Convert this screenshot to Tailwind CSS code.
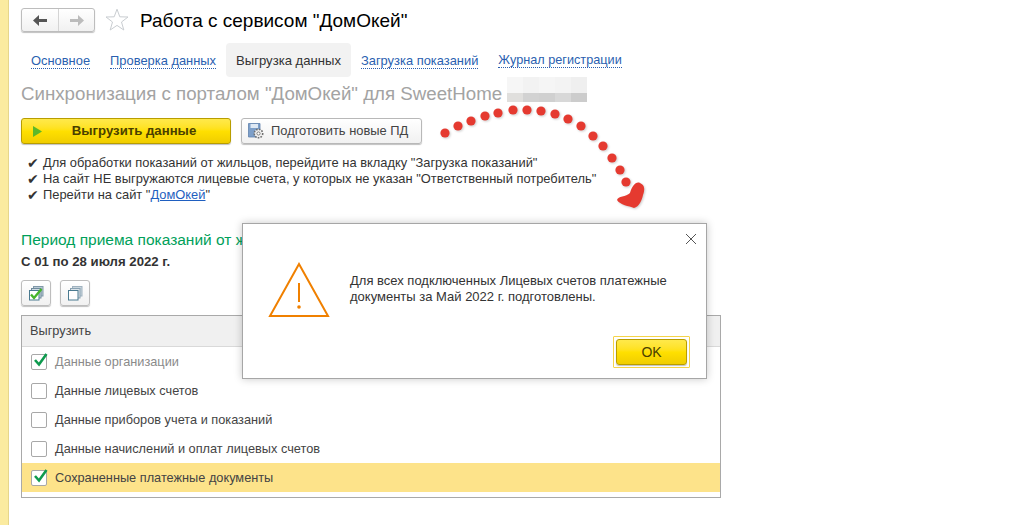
<!DOCTYPE html>
<html lang="ru">
<head>
  <meta charset="UTF-8" />
  <meta name="viewport" content="width=device-width, initial-scale=1.0" />
  <title>Работа с сервисом "ДомОкей"</title>
  <script src="https://cdn.jsdelivr.net/npm/@tailwindcss/browser@4"></script>
</head>
<body class="relative h-[525px] w-[1016px] overflow-hidden bg-white font-['Liberation_Sans',Arial,sans-serif] text-[12.9px] text-[#4b4b4b]">
  <div class="flex h-full">
    <!-- левая полоса -->
    <div class="w-[9px] shrink-0 border-r border-[#e6d68c] bg-[#fbeba0]"></div>

    <div class="flex-1 pl-[12px]">
      <!-- шапка -->
      <div class="flex h-[43px] items-start pt-[8px]">
        <div class="flex h-[24px] w-[74px] rounded-[3px] border border-[#bdbdbd] bg-gradient-to-b from-white to-[#f1f1f1] shadow-[0_1px_1px_rgba(0,0,0,0.25)]">
          <div class="flex w-[37px] items-center justify-center border-r border-[#d4d4d4]">
            <svg width="14" height="11" viewBox="0 0 14 11"><path d="M6 0 L0 5.5 L6 11 V7 H14 V4 H6 Z" fill="#555"/></svg>
          </div>
          <div class="flex flex-1 items-center justify-center">
            <svg width="14" height="11" viewBox="0 0 14 11"><path d="M8 0 L14 5.5 L8 11 V7 H0 V4 H8 Z" fill="#bcbcbc"/></svg>
          </div>
        </div>
        <svg class="ml-[10px]" width="24" height="23" viewBox="0 0 24 23"><path d="M12 1.2 L14.8 8.8 L23 9 L16.5 14 L18.8 22 L12 17.4 L5.2 22 L7.5 14 L1 9 L9.2 8.8 Z" fill="none" stroke="#c9cdd1" stroke-width="1"/></svg>
        <div class="ml-[11px] text-[19px] leading-[26px] text-black">Работа с сервисом "ДомОкей"</div>
      </div>

      <!-- вкладки -->
      <div class="flex h-[34px] items-center">
        <div class="px-[10px] pt-[1px]"><a class="border-b border-dotted border-[#2a5fb0] leading-[14px] text-[#2a5fb0]">Основное</a></div>
        <div class="px-[10px] pt-[1px]"><a class="border-b border-dotted border-[#2a5fb0] leading-[14px] text-[#2a5fb0]">Проверка данных</a></div>
        <div class="flex h-full items-center rounded-[4px] bg-[#f2f2f2] px-[10px] pt-[1px] text-[13.1px] text-[#333]">Выгрузка данных</div>
        <div class="px-[10px] pt-[1px]"><a class="border-b border-dotted border-[#2a5fb0] leading-[14px] text-[#2a5fb0]">Загрузка показаний</a></div>
        <div class="px-[10px] pt-[1px] text-[12.7px]"><a class="border-b border-dotted border-[#2a5fb0] leading-[14px] text-[#2a5fb0]">Журнал регистрации</a></div>
      </div>

      <div class="flex h-[25px] items-start">
        <h1 class="mt-[4px] text-[18.7px] leading-[25px] text-[#a3a3a3]">Синхронизация с порталом "ДомОкей" для SweetHome</h1>
        <div class="ml-[5px] grid h-[25px] w-[80px] grid-cols-5 grid-rows-[16px_9px]">
          <div class="bg-[#f6f6f6]"></div><div class="bg-[#f2f2f2]"></div><div class="bg-[#f5f5f5]"></div><div class="bg-[#f3f3f3]"></div><div class="bg-[#efefef]"></div>
          <div class="bg-[#e0dfdd]"></div><div class="bg-[#d2d2d2]"></div><div class="bg-[#d0d0d0]"></div><div class="bg-[#d8d8d8]"></div><div class="bg-[#cccccc]"></div>
        </div>
      </div>

      <!-- кнопки -->
      <div class="mt-[16px] flex h-[26px] gap-[10px]">
        <button class="flex w-[210px] items-center rounded-[3px] border border-[#b89d00] bg-gradient-to-b from-[#ffe94a] via-[#ffe000] to-[#f0cd00] pl-[11px] shadow-[0_1px_1px_rgba(0,0,0,0.25)]">
          <svg width="9" height="11" viewBox="0 0 9 11"><path d="M0 0 L9 5.5 L0 11 Z" fill="#5cb82a"/></svg>
          <span class="flex-1 pr-[4px] text-center text-[13.2px] font-bold text-[#4a4000]">Выгрузить данные</span>
        </button>
        <button class="flex w-[181px] items-center gap-[7px] rounded-[3px] border border-[#b8b8b8] bg-gradient-to-b from-white to-[#f1f1f1] pl-[6px] text-[#444] shadow-[0_1px_1px_rgba(0,0,0,0.25)]">
          <svg width="16" height="16" viewBox="0 0 16 16"><path d="M0.5 0.5 H12 V14 H0.5 Z" fill="#7d9fc9" stroke="#5f82ad" stroke-width="0.8"/><rect x="2.5" y="1" width="7.5" height="4" fill="#dfe9f4"/><circle cx="10.5" cy="10.5" r="4.2" fill="#f4f4f4" stroke="#6f6f6f" stroke-width="1.6" stroke-dasharray="1.6 1.2"/><circle cx="10.5" cy="10.5" r="1.6" fill="#fff" stroke="#6f6f6f" stroke-width="0.9"/></svg>
          <span>Подготовить новые ПД</span>
        </button>
      </div>

      <!-- примечания -->
      <ul class="mt-[11px] pl-[6px] leading-[16px] text-[#333]">
        <li class="flex gap-[4px]"><span class="w-[12px] font-['DejaVu_Sans'] text-[14px]">✔</span><span>Для обработки показаний от жильцов, перейдите на вкладку "Загрузка показаний"</span></li>
        <li class="flex gap-[4px]"><span class="w-[12px] font-['DejaVu_Sans'] text-[14px]">✔</span><span>На сайт НЕ выгружаются лицевые счета, у которых не указан "Ответственный потребитель"</span></li>
        <li class="flex gap-[4px]"><span class="w-[12px] font-['DejaVu_Sans'] text-[14px]">✔</span><span>Перейти на сайт "<a class="text-[#1f5fc0] underline">ДомОкей</a>"</span></li>
      </ul>

      <div class="mt-[27px] text-[15.5px] leading-[20px] text-[#00a05a]">Период приема показаний от жильцов</div>
      <div class="mt-[4px] text-[13.2px] font-bold leading-[16px] text-[#333]">С 01 по 28 июля 2022 г.</div>

      <!-- кнопки отметок -->
      <div class="mt-[10px] flex gap-[9px]">
        <button class="flex h-[26px] w-[30px] items-center justify-center rounded-[3px] border border-[#bdbdbd] bg-gradient-to-b from-white to-[#f1f1f1] shadow-[0_1px_1px_rgba(0,0,0,0.25)]">
          <svg width="15" height="15" viewBox="0 0 15 15"><rect x="4.5" y="0.5" width="9.5" height="9.5" fill="#b9c9d4" stroke="#7f98a8"/><rect x="2.5" y="2.5" width="9.5" height="9.5" fill="#cfdbe3" stroke="#6f8a9c"/><rect x="0.5" y="4.5" width="9.5" height="9.5" fill="#fff" stroke="#4a7a90"/><path d="M2 8.5 L5 12 L12.5 3" fill="none" stroke="#45b52a" stroke-width="2.4"/></svg>
        </button>
        <button class="flex h-[26px] w-[30px] items-center justify-center rounded-[3px] border border-[#bdbdbd] bg-gradient-to-b from-white to-[#f1f1f1] shadow-[0_1px_1px_rgba(0,0,0,0.25)]">
          <svg width="15" height="15" viewBox="0 0 15 15"><rect x="4.5" y="0.5" width="9.5" height="9.5" fill="#c9d5dd" stroke="#9fb2bf"/><rect x="2.5" y="2.5" width="9.5" height="9.5" fill="#dbe4ea" stroke="#8aa2b2"/><rect x="0.5" y="4.5" width="9.5" height="9.5" fill="#fff" stroke="#4a7a90"/></svg>
        </button>
      </div>

      <!-- таблица -->
      <div class="mt-[9px] h-[183px] w-[700px] border border-[#a9a9a9] text-[12.75px] text-[#444]">
        <div class="flex h-[31px] items-center border-b border-[#d9d9d9] bg-[#f0f0f0] pl-[8px]">Выгрузить</div>
        <div class="flex h-[29px] items-center pl-[9px] text-[#8a8a8a]">
          <span class="relative mr-[8px] h-[16px] w-[16px] rounded-[2px] border border-[#a8a8a8] bg-white">
            <svg class="absolute -top-[3px] left-[1px]" width="15" height="16" viewBox="0 0 15 16"><path d="M2 8 L6 12.5 L13.5 2" fill="none" stroke="#0e9a4e" stroke-width="2.6"/></svg>
          </span>Данные организации
        </div>
        <div class="flex h-[29px] items-center pl-[9px]"><span class="mr-[8px] h-[16px] w-[16px] rounded-[2px] border border-[#a8a8a8] bg-white"></span>Данные лицевых счетов</div>
        <div class="flex h-[29px] items-center pl-[9px]"><span class="mr-[8px] h-[16px] w-[16px] rounded-[2px] border border-[#a8a8a8] bg-white"></span>Данные приборов учета и показаний</div>
        <div class="flex h-[29px] items-center pl-[9px]"><span class="mr-[8px] h-[16px] w-[16px] rounded-[2px] border border-[#a8a8a8] bg-white"></span>Данные начислений и оплат лицевых счетов</div>
        <div class="flex h-[29px] items-center bg-[#fde38a] pl-[9px]">
          <span class="relative mr-[8px] h-[16px] w-[16px] rounded-[2px] border border-[#a8a8a8] bg-white">
            <svg class="absolute -top-[3px] left-[1px]" width="15" height="16" viewBox="0 0 15 16"><path d="M2 8 L6 12.5 L13.5 2" fill="none" stroke="#0e9a4e" stroke-width="2.6"/></svg>
          </span>Сохраненные платежные документы
        </div>
      </div>
    </div>
  </div>

  <!-- стрелка поверх страницы -->
  <svg class="absolute left-0 top-0 drop-shadow-[1px_1px_1px_rgba(0,0,0,0.2)]" width="1016" height="525" viewBox="0 0 1016 525" fill="#e53a30">
    <circle cx="445" cy="133" r="4.6"/><circle cx="458" cy="126" r="4.6"/><circle cx="471" cy="121" r="4.6"/><circle cx="485" cy="116" r="4.6"/>
    <circle cx="498" cy="113" r="4.6"/><circle cx="513" cy="110" r="4.6"/><circle cx="527" cy="110" r="4.6"/><circle cx="541" cy="111" r="4.6"/>
    <circle cx="555" cy="114" r="4.6"/><circle cx="568" cy="119" r="4.6"/><circle cx="581" cy="126" r="4.6"/><circle cx="593" cy="136" r="4.6"/>
    <circle cx="603" cy="146" r="4.6"/><circle cx="612" cy="158" r="4.6"/><circle cx="620" cy="170" r="4.6"/><circle cx="626" cy="182" r="4.6"/>
    <path d="M617 200 C618 196 626 197 630 193 C632 186 636 181 640 183 C645 185 645 190 643 195 C642 200 639 207 634 208 C629 206 620 205 617 200 Z"/>
  </svg>

  <!-- диалог -->
  <div class="absolute left-[242px] top-[223px] h-[156px] w-[465px] border border-[#a6a6a6] bg-white shadow-[0_0_8px_rgba(0,0,0,0.22)]">
    <svg class="absolute right-[9px] top-[9px]" width="12" height="12" viewBox="0 0 12 12"><path d="M1 1 L11 11 M11 1 L1 11" stroke="#555" stroke-width="1"/></svg>
    <div class="flex pl-[25px] pt-[38px]">
      <svg width="62" height="56" viewBox="0 0 62 56"><path d="M31 2 L60 54 H2 Z" fill="none" stroke="#f08000" stroke-width="2"/><path d="M31 21 V40" stroke="#f08000" stroke-width="2"/><circle cx="31" cy="45" r="1.8" fill="#f08000"/></svg>
      <p class="ml-[20px] mt-[11px] w-[340px] text-[13px] leading-[16px] text-[#333]">Для всех подключенных Лицевых счетов платежные документы за Май 2022 г. подготовлены.</p>
    </div>
    <div class="absolute right-[16px] top-[112px] rounded-[1px] border border-[#f5d44a] p-[2px]">
      <button class="block h-[26px] w-[71px] rounded-[3px] border border-[#b89d00] bg-gradient-to-b from-[#ffe94a] via-[#ffe000] to-[#f0cd00] text-[14px] text-[#4a4000] shadow-[0_1px_1px_rgba(0,0,0,0.25)]">OK</button>
    </div>
  </div>
</body>
</html>
